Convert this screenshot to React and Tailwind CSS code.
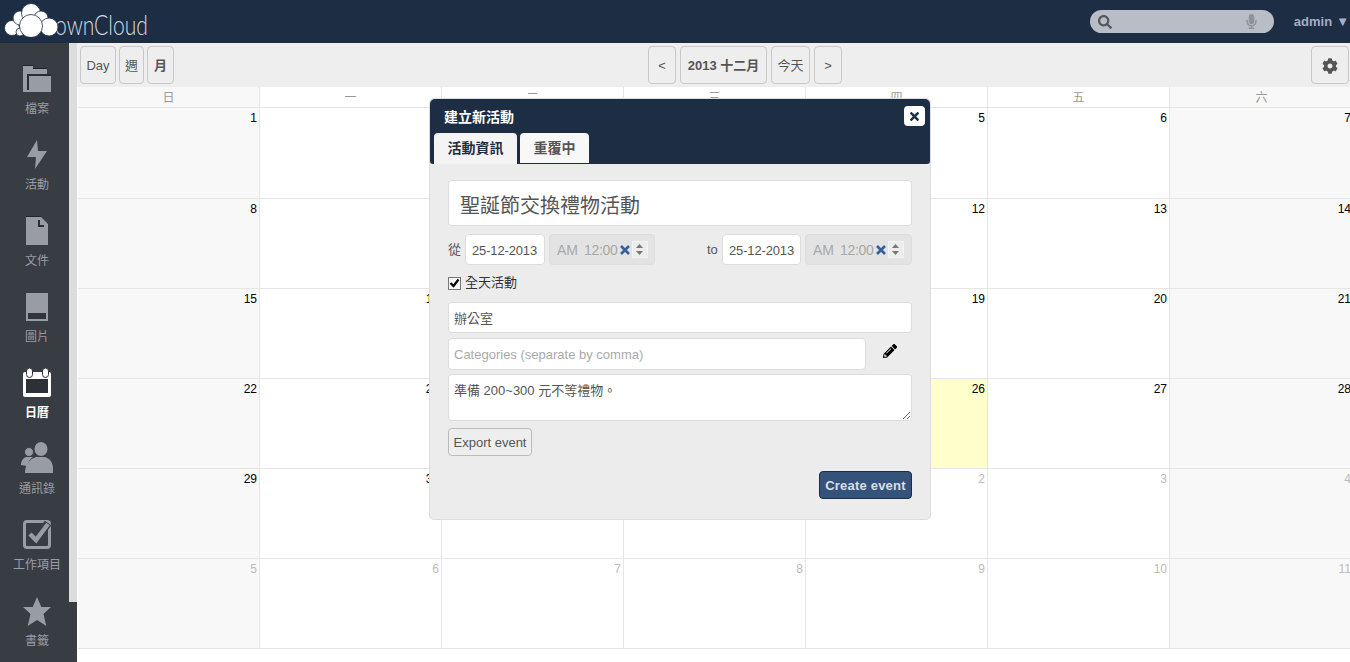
import React from 'react';
import { FaCog, FaSearch, FaMicrophone, FaPencilAlt, FaTimes } from 'react-icons/fa';

const weeks = [
  [1, 2, 3, 4, 5, 6, 7],
  [8, 9, 10, 11, 12, 13, 14],
  [15, 16, 17, 18, 19, 20, 21],
  [22, 23, 24, 25, 26, 27, 28],
  [29, 30, 31, 1, 2, 3, 4],
  [5, 6, 7, 8, 9, 10, 11],
];
const dayNames = ['日', '一', '二', '三', '四', '五', '六'];

const FolderIcon = () => (
  <svg className="mb-[1px]" width="28" height="27" viewBox="0 0 28 27">
    <path d="M0 0h10v4h14v5h4v18H0z" fill="#9a9ca3" />
    <path d="M0 0h10v1H0zM10 3h14v1H10z" fill="#22252b" />
    <path d="M4 25V9h24v2H6v14z" fill="#2a2d33" />
  </svg>
);
const ZapIcon = () => (
  <svg width="20" height="29" viewBox="0 0 20 29">
    <path d="M10 0 0 17h9l-1 12L20 11h-9z" fill="#9a9ca3" />
  </svg>
);
const FileIcon = () => (
  <svg width="22" height="29" viewBox="0 0 22 29">
    <path d="M0 1h15l7 7v21H0z" fill="#9a9ca3" />
    <path d="M0 0h15v1H0z" fill="#22252b" />
    <path d="M12 4h2v5h4v2h-6z" fill="#2a2d33" />
  </svg>
);
const ImageIcon = () => (
  <svg width="22" height="28" viewBox="0 0 22 28">
    <path d="M0 0h22v28H0z" fill="#9a9ca3" />
    <path d="M2 20h18v6H2z" fill="#30343b" />
  </svg>
);
const CalendarIcon = () => (
  <svg width="28" height="29" viewBox="0 0 28 29">
    <path d="M2 4h24a2 2 0 0 1 2 2v21a2 2 0 0 1-2 2H2a2 2 0 0 1-2-2V6a2 2 0 0 1 2-2z" fill="#fff" />
    <path d="M3 11h22v14H3z" fill="#2c3037" />
    <rect x="3.500" y="0" width="6" height="9.500" rx="3" fill="#fff" stroke="#2c3037" />
    <rect x="19.500" y="0" width="6" height="9.500" rx="3" fill="#fff" stroke="#2c3037" />
  </svg>
);
const PeopleIcon = () => (
  <svg width="32" height="31" viewBox="0 0 32 31">
    <ellipse cx="20" cy="7" rx="6.500" ry="7" fill="#9a9ca3" />
    <path d="M4 31c0-9 5-14 11-16h9c5 2 8 5 8 12v4z" fill="#9a9ca3" />
    <circle cx="8" cy="10" r="4.500" fill="#9a9ca3" stroke="#383c43" />
    <path d="M0 23c0-4 2-7 5-8h7c-3 2-5 5-6 9z" fill="#9a9ca3" />
  </svg>
);
const CheckIcon = () => (
  <svg width="28" height="29" viewBox="0 0 28 29">
    <rect x="1.500" y="1.500" width="25" height="26" rx="2.500" fill="none" stroke="#9a9ca3" strokeWidth="3" />
    <path d="M7 14l6 6L25 3" fill="none" stroke="#383c43" strokeWidth="8" />
    <path d="M7 14l6 6L25 4" fill="none" stroke="#9a9ca3" strokeWidth="4.500" />
  </svg>
);
const StarIcon = () => (
  <svg className="-mb-[1px]" width="28" height="29" viewBox="0 0 28 29">
    <path d="M14 0l4.300 10H28l-7.500 7 2.800 12L14 23l-9.300 6 2.800-12L0 10h9.700z" fill="#9a9ca3" />
  </svg>
);

const navItems = [
  { label: '檔案', icon: <FolderIcon /> },
  { label: '活動', icon: <ZapIcon /> },
  { label: '文件', icon: <FileIcon /> },
  { label: '圖片', icon: <ImageIcon /> },
  { label: '日曆', icon: <CalendarIcon />, active: true },
  { label: '通訊錄', icon: <PeopleIcon /> },
  { label: '工作項目', icon: <CheckIcon /> },
  { label: '書籤', icon: <StarIcon /> },
];

const Logo = () => (
  <div className="relative h-[43px] w-[160px] shrink-0">
    <span className="absolute left-[55px] top-[7px] origin-left scale-x-[0.78] text-[27px] leading-[36px] font-light text-[#d5dae2] [font-family:Lato,sans-serif]">ownCloud</span>
    <svg className="absolute left-[4px] top-[3px]" width="54" height="34" viewBox="0 0 54 34">
      <g fill="#fff" stroke="#1d2d44" strokeWidth="0.800">
        <circle cx="8" cy="25" r="7.500" />
        <circle cx="16" cy="15" r="7" />
        <circle cx="27" cy="10" r="9.500" />
        <circle cx="37" cy="15" r="7" />
        <circle cx="45" cy="24" r="9" />
        <circle cx="16" cy="29" r="4" />
        <circle cx="27" cy="23" r="11.500" />
      </g>
    </svg>
  </div>
);

const ToolButton = ({ className = '', children }) => (
  <button className={`h-[38px] rounded-[4px] border border-[#c8c8c8] bg-[#eeeeee] pt-[1px] text-[13px] text-[#555] ${className}`}>
    {children}
  </button>
);

const TimeBox = ({ className = '' }) => (
  <div className={`flex h-[31px] items-center rounded-[4px] border border-[#dddddd] bg-[#e3e3e3] pl-[7px] text-[14px] text-[#a8a8a8] ${className}`}>
    <span className="mt-[2px]">AM</span>
    <span className="ml-[6px] mt-[2px] tracking-[-0.3px]">12:00</span>
    <svg className="ml-[2px]" width="10" height="10" viewBox="0 0 10 10">
      <path d="M1 1l8 8M9 1l-8 8" stroke="#35609c" strokeWidth="2.600" />
    </svg>
    <div className="ml-[2px] flex h-[17px] w-[16px] flex-col items-center justify-around border border-[#f3f3f3] bg-[#ececec]">
      <svg width="7" height="4" viewBox="0 0 7 4"><path d="M3.500 0 7 4H0z" fill="#777" /></svg>
      <svg width="7" height="4" viewBox="0 0 7 4"><path d="M0 0h7L3.500 4z" fill="#777" /></svg>
    </div>
  </div>
);

const inputClass = 'rounded-[4px] border border-[#dddddd] bg-white px-[5px] text-[13px] text-[#555] outline-none placeholder:text-[#aaaaaa]';

const EventDialog = () => (
  <div className="absolute left-[429px] top-[98px] h-[422px] w-[502px] rounded-[5px] border border-[#dddddd] bg-[#ececec]">
    <div className="relative h-[65px] rounded-t-[5px] rounded-b-[3px] bg-[#1d2d44] pl-[4px]">
      <div className="pl-[10px] pt-[10px] text-[14px] leading-[17px] font-bold text-white">建立新活動</div>
      <div className="mt-[7px] flex gap-[3px]">
        <div className="flex h-[31px] w-[83px] items-center justify-center rounded-t-[4px] bg-[#f4f4f4] text-[14px] font-bold text-[#1d2d44]">活動資訊</div>
        <div className="flex h-[30px] w-[69px] items-center justify-center rounded-t-[4px] bg-[#f8f8f8] text-[14px] font-bold text-[#555]">重覆中</div>
      </div>
      <button className="absolute right-[5px] top-[7px] flex h-[20px] w-[21px] items-center justify-center rounded-[4px] bg-white text-[#1d2d44]">
        <FaTimes size={13} />
      </button>
    </div>
    <div className="flex flex-col px-[18px] pt-[16px]">
      <input readOnly value="聖誕節交換禮物活動" className={`${inputClass} h-[46px] w-full !px-[11px] pt-[3px] !text-[20px]`} />
      <div className="mt-[8px] flex h-[31px] items-center text-[13px] text-[#555]">
        <span className="w-[17px]">從</span>
        <input readOnly value="25-12-2013" className={`${inputClass} h-[31px] w-[80px] !pr-0 !pl-[6px] pt-[2px] tracking-[-0.15px]`} />
        <TimeBox className="ml-[4px] w-[106px]" />
        <span className="ml-[52px] w-[15px]">to</span>
        <input readOnly value="25-12-2013" className={`${inputClass} h-[31px] w-[79px] !pr-0 !pl-[6px] pt-[2px] tracking-[-0.15px]`} />
        <TimeBox className="ml-[4px] w-[107px]" />
      </div>
      <label className="mt-[8px] flex h-[20px] items-center text-[13px] text-[#333]">
        <span className="flex h-[13px] w-[13px] items-center justify-center border border-[#777] bg-[#f6f6f6]">
          <svg width="11" height="10" viewBox="0 0 11 10"><path d="M1.500 5l3 3L9.500 1.500" fill="none" stroke="#000" strokeWidth="2.200" /></svg>
        </span>
        <span className="ml-[4px]">全天活動</span>
      </label>
      <input readOnly value="辦公室" className={`${inputClass} mt-[9px] h-[31px] w-full`} />
      <div className="mt-[5px] flex items-center">
        <input readOnly placeholder="Categories (separate by comma)" className={`${inputClass} h-[32px] w-[418px]`} />
        <FaPencilAlt size={14} className="ml-[17px] -mt-[7px] text-black" />
      </div>
      <textarea readOnly value="準備 200~300 元不等禮物。" className={`${inputClass} mt-[4px] h-[47px] w-full py-[6px]`} />
      <button className="mt-[7px] h-[28px] w-[84px] rounded-[4px] border border-[#bbbbbb] bg-[#eeeeee] pt-[1px] text-[13px] text-[#555]">Export event</button>
      <button className="mt-[15px] h-[28px] w-[93px] self-end rounded-[4px] border border-[#1d2d44] bg-[#35537a] pt-[1px] text-[13px] font-bold tracking-[0.2px] text-[#d5dfe9]">Create event</button>
    </div>
  </div>
);

export default function App() {
  return (
    <div className="flex h-screen flex-col overflow-hidden bg-white [font-family:'Liberation_Sans','Noto_Sans_CJK_TC',sans-serif]">
      <header className="flex h-[43px] shrink-0 items-center bg-[#1d2d44]">
        <Logo />
        <div className="ml-auto flex h-[23px] w-[184px] items-center rounded-full bg-[#b9bdc5] pl-[8px] pr-[15px] text-[#54585f]">
          <FaSearch size={14} />
          <FaMicrophone size={15} className="ml-auto text-[#8e9299]" />
        </div>
        <span className="ml-[20px] text-[13px] font-bold text-[#a3b0c2]">admin</span>
        <span className="ml-[4px] mr-[1px] text-[13px] text-[#a3b0c2]">▼</span>
      </header>

      <div className="flex min-h-0 flex-1">
        <aside className="flex w-[77px] shrink-0 bg-[#383c43]">
          <nav className="w-[69px] shrink-0 pl-[5px]">
            {navItems.map((item) => (
              <a key={item.label} className="flex h-[76px] flex-col items-center justify-end pb-[2px]">
                <div className="flex h-[32px] items-end">{item.icon}</div>
                <span className={`mt-[8px] whitespace-nowrap text-[12px] leading-[16px] ${item.active ? 'font-bold text-white' : 'text-[#9a9ca3]'}`}>{item.label}</span>
              </a>
            ))}
          </nav>
          <div className="h-[559px] w-[8px] bg-[#dcdcdc]" />
        </aside>

        <main className="relative min-w-0 flex-1">
          <div className="flex h-[44px] items-start bg-[#eeeeee] pl-[3px] pt-[3px]">
            <div className="flex gap-[3px]">
              <ToolButton className="w-[36px]">Day</ToolButton>
              <ToolButton className="w-[25px]">週</ToolButton>
              <ToolButton className="w-[27px] font-bold">月</ToolButton>
            </div>
            <div className="ml-[474px] flex gap-[4px]">
              <ToolButton className="w-[28px]">&lt;</ToolButton>
              <ToolButton className="w-[87px] font-bold">2013 十二月</ToolButton>
              <ToolButton className="w-[39px]">今天</ToolButton>
              <ToolButton className="w-[28px]">&gt;</ToolButton>
            </div>
            <ToolButton className="ml-auto mr-[1px] flex w-[38px] items-center justify-center">
              <FaCog size={16} />
            </ToolButton>
          </div>

          <div className="ml-[1px] grid w-[1276px] grid-cols-[182px_182px_182px_182px_182px_182px_184px] grid-rows-[21px_91px_90px_90px_90px_90px_90px]">
            {dayNames.map((name, col) => (
              <div key={name} className={`border-r border-b border-[#e6e6e6] text-center text-[12px] leading-[22px] text-[#999] ${col === 0 || col === 6 ? 'bg-[#f8f8f8]' : 'bg-white'}`}>
                {name}
              </div>
            ))}
            {weeks.flatMap((week, row) =>
              week.map((day, col) => {
                const outside = (row === 4 && col > 2) || row === 5;
                const today = row === 3 && col === 4;
                const weekend = col === 0 || col === 6;
                return (
                  <div
                    key={`${row}-${col}`}
                    className={`border-r border-b border-[#e6e6e6] pr-[2px] pt-[3px] text-right text-[12px] leading-[15px] ${
                      today ? 'bg-[#ffffcc]' : weekend ? 'bg-[#f8f8f8]' : 'bg-white'
                    } ${outside ? 'text-[#bbbbbb]' : 'text-black'}`}
                  >
                    {day}
                  </div>
                );
              })
            )}
          </div>
        </main>
      </div>

      <EventDialog />
    </div>
  );
}
